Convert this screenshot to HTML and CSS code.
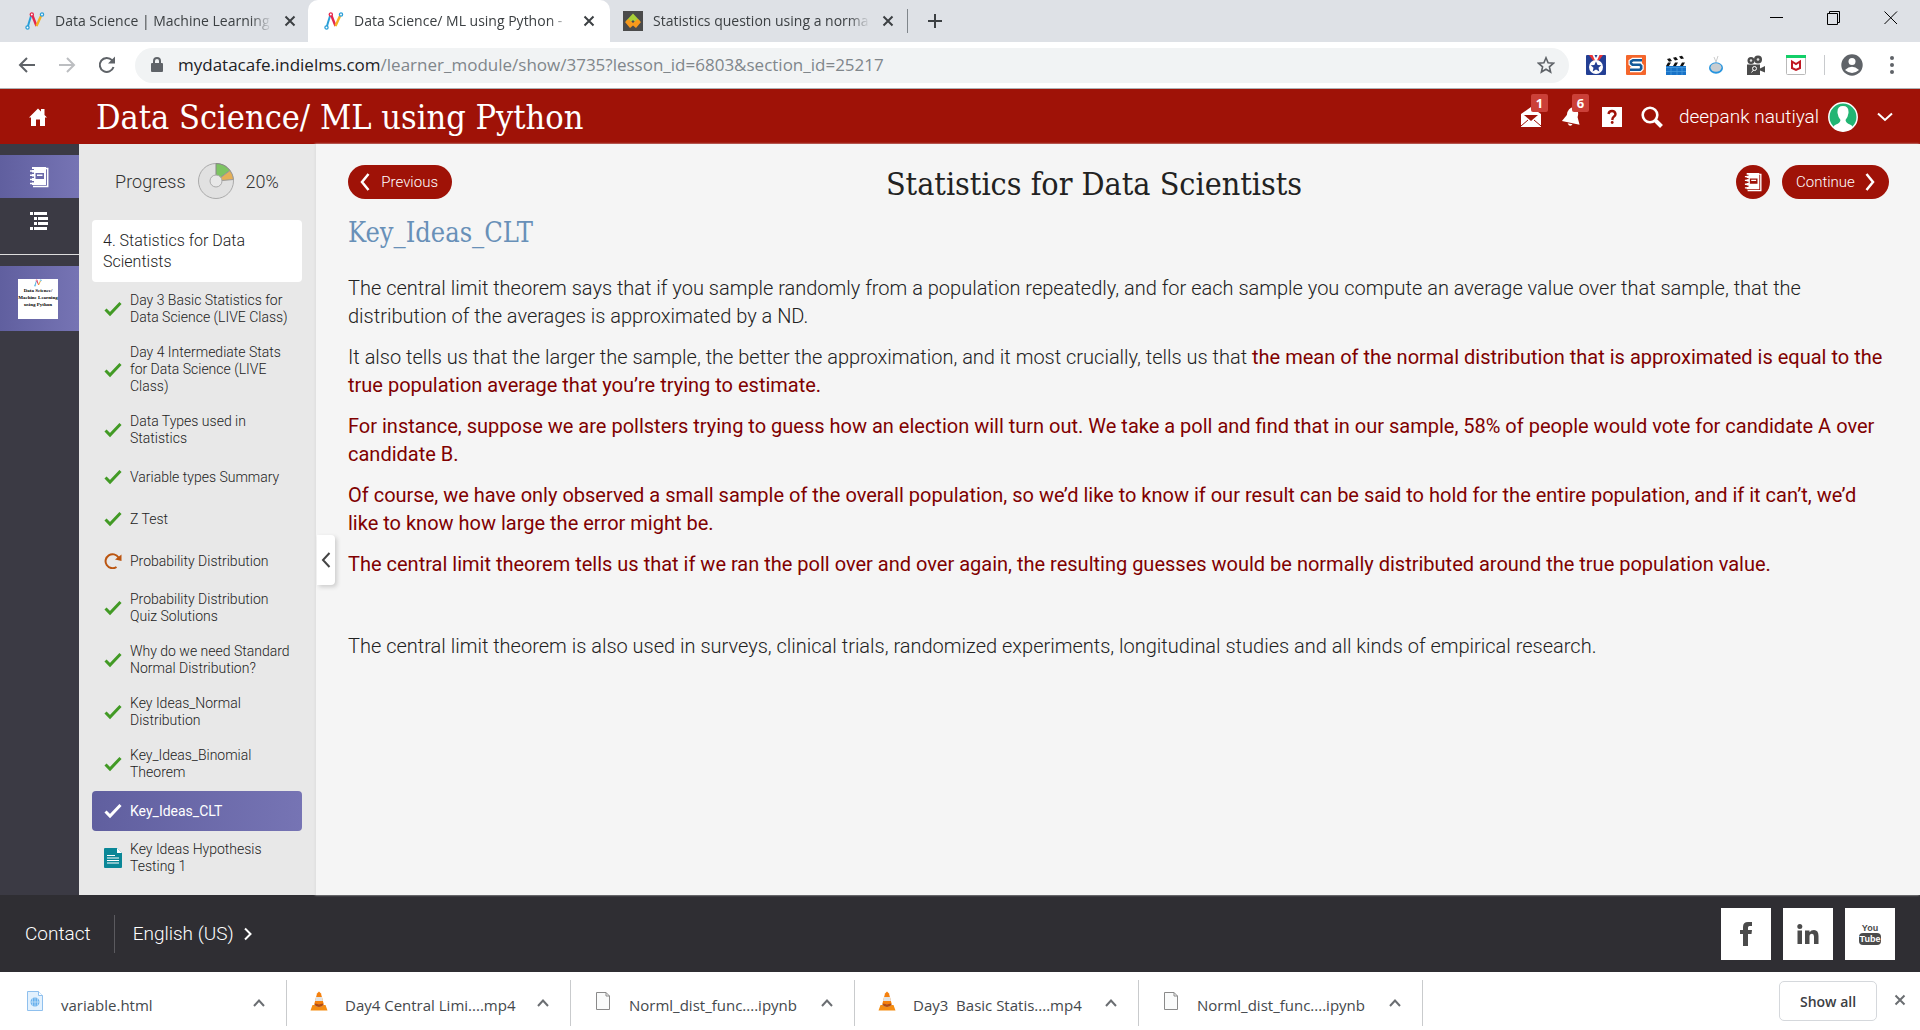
FILE: index.html
```html
<!DOCTYPE html>
<html lang="en">
<head>
<meta charset="utf-8">
<title>Data Science/ ML using Python</title>
<link rel="stylesheet" href="styles.css">
</head>
<body>
<svg class="defs" aria-hidden="true">
  <symbol id="fav" viewBox="0 0 20 20"><path d="M2.500 16.500 6 5" stroke="#2a9fd8" stroke-width="2"/><path d="M7 3.500 11.500 15" stroke="#e5274c" stroke-width="2.400"/><path d="M11.500 15 16 5" stroke="#f5b021" stroke-width="2.400"/><g fill="#fff" stroke-width="1.300"><circle cx="2.500" cy="16.500" r="1.600" stroke="#2a9fd8"/><circle cx="6.800" cy="3.500" r="1.600" stroke="#e5274c"/><circle cx="17" cy="3.500" r="1.600" stroke="#2a9fd8"/></g></symbol>
  <symbol id="x" viewBox="0 0 12 12"><path d="M1.500 1.500 10.500 10.500M10.500 1.500 1.500 10.500" fill="none" stroke="currentColor" stroke-width="2"/></symbol>
  <symbol id="check" viewBox="0 0 18 16"><path d="M1.500 8.500 6 13 16.500 2" fill="none" stroke="currentColor" stroke-width="3"/></symbol>
  <symbol id="book" viewBox="0 0 20 22"><path fill="currentColor" fill-rule="evenodd" d="M3 1H17V19H3V16.500H5V15H3V12H5V10.500H3V8H5V6.500H3V4H5V3H3ZM6.500 7V13H15V7ZM8 8.500H13.500V10H8Z"/><path fill="none" stroke="currentColor" stroke-width="1.500" d="M17 2.500H18.700V20.500H4M1 5H4M1 9.200H4M1 13.500H4M1 17.500H4"/></symbol>
  <symbol id="cone" viewBox="0 0 18 20"><path d="M7 2.500 9 .5 11 2.500 14.500 16H3.500Z" fill="#f5800d"/><path d="M6 6 12 6 13 10H5Z" fill="#e1e4e5"/><path d="M4.200 13H13.800L14.500 16H3.500Z" fill="#c9ccce"/><path d="M2.500 14H4.500Q9 18 13.500 14H15.500L17.500 19.500H.5Z" fill="#f58d12"/><path d="M4.500 14Q9 18 13.500 14L12.700 12.500Q9 14 5.300 12.500Z" fill="#b34c10"/></symbol>
  <symbol id="file" viewBox="0 0 16 20"><path d="M1.500 1.500H11L14.500 5V18.500H1.500Z" fill="#fafbfb" stroke="#8a8a8a"/><path d="M11 1.500V5H14.500" fill="none" stroke="#8a8a8a"/></symbol>
  <symbol id="up" viewBox="0 0 12 8"><path d="M1 7 6 1.500 11 7" fill="none" stroke="#6b6e72" stroke-width="2"/></symbol>
</svg>

<div class="tabstrip">
  <div class="tab"><svg class="favicon"><use href="#fav"/></svg><span class="tab-title">Data Science | Machine Learning</span><button class="close" aria-label="Close tab"><svg width="12" height="12"><use href="#x"/></svg></button></div>
  <div class="tab active"><svg class="favicon"><use href="#fav"/></svg><span class="tab-title">Data Science/ ML using Python -</span><button class="close" aria-label="Close tab"><svg width="12" height="12"><use href="#x"/></svg></button></div>
  <div class="tab last"><svg class="favicon" viewBox="0 0 20 20"><path fill="#4b4b4b" d="M0 0H20V20H0Z"/><path fill="#a8cf38" d="M10 2.500 17 10 14 13 10 9 6 13 3 10Z"/><path fill="#f7991c" d="M2 11 5.500 8 10 12 14.500 8 18 11 13 17 10 14.500 7 17Z"/></svg><span class="tab-title">Statistics question using a norma</span><button class="close" aria-label="Close tab"><svg width="12" height="12"><use href="#x"/></svg></button></div>
  <button class="newtab" aria-label="New tab"><svg width="16" height="16" viewBox="0 0 16 16"><path d="M8 1V15M1 8H15" stroke="#3c4043" stroke-width="2"/></svg></button>
  <div class="window-controls">
    <button aria-label="Minimize"><svg width="14" height="14" viewBox="0 0 14 14"><path d="M0 6.500H13" stroke="#000"/></svg></button>
    <button aria-label="Restore"><svg width="14" height="14" viewBox="0 0 14 14"><path d="M.5 2.500H10.500V13.500H.5ZM2.500 2.500V.5H12.500V11.500H10.500" fill="none" stroke="#000"/></svg></button>
    <button aria-label="Close window"><svg width="14" height="14" viewBox="0 0 14 14"><path d="M.5 .5 13 13M13 .5 .5 13" stroke="#000"/></svg></button>
  </div>
</div>

<div class="toolbar">
  <div class="nav">
    <button aria-label="Back"><svg width="20" height="20" viewBox="0 0 20 20"><path d="M18 10H3M10 3 3 10 10 17" fill="none" stroke="#5f6368" stroke-width="2"/></svg></button>
    <button aria-label="Forward"><svg width="20" height="20" viewBox="0 0 20 20"><path d="M2 10H17M10 3 17 10 10 17" fill="none" stroke="#bcbec1" stroke-width="2"/></svg></button>
    <button aria-label="Reload"><svg width="20" height="20" viewBox="0 0 20 20"><path d="M16.500 12A7 7 0 1 1 15 5.200L16.500 7" fill="none" stroke="#5f6368" stroke-width="2"/><path d="M18 1.500V8.500H11Z" fill="#5f6368"/></svg></button>
  </div>
  <div class="omnibox">
    <svg width="12" height="16" viewBox="0 0 12 16"><path d="M3 6V4A3 3 0 0 1 9 4V6" fill="none" stroke="#5f6368" stroke-width="2"/><rect y="6" width="12" height="9" rx="1" fill="#5f6368"/></svg>
    <span class="url"><b>mydatacafe.indielms.com</b>/learner_module/show/3735?lesson_id=6803&amp;section_id=25217</span>
    <button aria-label="Bookmark"><svg width="18" height="18" viewBox="0 0 18 18"><path d="M9 1.800 11.100 6.700 16.500 7.200 12.400 10.800 13.600 16 9 13.200 4.400 16 5.600 10.800 1.500 7.200 6.900 6.700Z" fill="none" stroke="#5f6368" stroke-width="1.600"/></svg></button>
  </div>
  <div class="extensions">
    <svg width="20" height="20" viewBox="0 0 20 20"><rect width="20" height="20" rx="1" fill="#233f94"/><path d="M3 0H6.500L10 5.500H7ZM13.500 0H17L13 5.500H10Z" fill="#e33"/><path d="M6.500 0H8.500L10 3 11.500 0H13.500L11 5.500H9Z" fill="#fff"/><circle cx="10" cy="12" r="7" fill="#fff"/><circle cx="10" cy="12" r="5" fill="#fff"/><path d="M10 6.500 11.600 10 15.300 10.300 12.500 12.800 13.300 16.500 10 14.600 6.700 16.500 7.500 12.800 4.700 10.300 8.400 10Z" fill="#233f94"/></svg>
    <svg width="20" height="20" viewBox="0 0 20 20"><rect width="20" height="20" rx="1" fill="#f4662c"/><path d="M16 5.200H7L5 6.500V8.500L6.500 9.800H14L15.200 11V13.500L14 14.800H4" fill="none" stroke="#fff" stroke-width="5"/><path d="M16 5.200H7L5 6.500V8.500L6.500 9.800H14L15.200 11V13.500L14 14.800H4" fill="none" stroke="#12599b" stroke-width="2.600"/></svg>
    <svg width="20" height="20" viewBox="0 0 20 20"><rect y="8" width="20" height="12" fill="#1973c8"/><path d="M0 12.500H20M0 16.500H20M5 12V20M11 12V20M16 12V20" stroke="#4b9de0" stroke-width=".7"/><path d="M0 4 19 0 20 3 1 7ZM0 7.500H20V11H0Z" fill="#fff"/><path d="M1 4 4 3.300 6 6 3 6.700ZM7 2.700 10 2 12 4.700 9 5.400ZM13 1.400 16 .7 18 3.400 15 4.100ZM2 7.500H5L3 11H0ZM9 7.500H12L10 11H7ZM16 7.500H19L17 11H14Z" fill="#111"/></svg>
    <svg width="20" height="20" viewBox="0 0 20 20"><path d="M8 2 10 7 12 1" fill="none" stroke="#ccc"/><ellipse cx="10" cy="13" rx="7" ry="5.800" fill="#2795df"/><ellipse cx="10" cy="12.500" rx="5.500" ry="4.200" fill="#c8cdd1"/></svg>
    <svg width="20" height="20" viewBox="0 0 20 20"><g fill="#4b4b4b"><circle cx="5" cy="5.500" r="3.500"/><circle cx="12" cy="4.500" r="4"/><path d="M1 9.500H14V20H1ZM14 13.500 19 11V17.500L14 15.500Z"/></g><circle cx="5" cy="5.500" r="1.200" fill="#ddd"/><circle cx="12" cy="4.500" r="1.300" fill="#ddd"/><circle cx="8.500" cy="13.500" r="2" fill="none" stroke="#fff"/><path d="M7.500 15 5.500 17.500" stroke="#fff"/></svg>
    <svg width="20" height="20" viewBox="0 0 20 20"><rect x=".5" y=".5" width="19" height="19" rx="1" fill="#fff" stroke="#b9b9b9"/><path d="M0 0H20V3H0Z" fill="#12cf68"/><path d="M6 6.500 10 9 14 6.500V13L10 14.800 6 13Z" fill="none" stroke="#c01722" stroke-width="2"/></svg>
  </div>
  <span class="rule"></span>
  <button class="profile" aria-label="Profile"><svg width="22" height="22" viewBox="0 0 22 22"><circle cx="11" cy="11" r="10.700" fill="#5f6368"/><circle cx="11" cy="7.500" r="3.500" fill="#fff"/><path d="M4 16Q11 9.500 18 16Q11 22 4 16Z" fill="#fff"/></svg></button>
  <button class="menu" aria-label="Menu"><svg width="4" height="18" viewBox="0 0 4 18"><g fill="#5f6368"><circle cx="2" cy="2" r="2"/><circle cx="2" cy="9" r="2"/><circle cx="2" cy="16" r="2"/></g></svg></button>
</div>

<header class="header">
  <a class="home" href="#" aria-label="Home"><svg width="20" height="20" viewBox="0 0 20 20"><path fill="#fff" d="M10 1.500 13 4.500V2H16.500V8L19 10.500H17V19H12V12.500H8V19H3V10.500H1Z"/></svg></a>
  <h1>Data Science/ ML using Python</h1>
  <div class="header-tools">
    <button class="tool" aria-label="Messages"><svg width="22" height="22" viewBox="0 0 22 22"><path fill="#fff" d="M1 8 11 1 21 8V21H1Z"/><path d="M4 9H18L11 15Z" fill="#9f1207"/><path d="M1 20 8 14M21 20 14 14" stroke="#9f1207"/></svg><span class="badge">1</span></button>
    <button class="tool" aria-label="Notifications"><svg width="22" height="22" viewBox="0 0 22 22"><g transform="rotate(12 11 11)"><path fill="#fff" d="M11 1Q17 2 16.500 10L20 17H2L5.500 10Q5 2 11 1ZM8 18H13Q11 22 8 18Z"/></g></svg><span class="badge">6</span></button>
    <button class="tool" aria-label="Help"><svg width="20" height="20" viewBox="0 0 20 20"><path fill="#fff" d="M0 0H20V20H0Z"/><path d="M6.500 7Q7 4 10 4T13.500 7Q13.500 8.500 12 9.500T10.200 13" fill="none" stroke="#9f1207" stroke-width="2.400"/><circle cx="10.200" cy="15.500" r="1.400" fill="#9f1207"/></svg></button>
    <button class="tool" aria-label="Search"><svg width="22" height="22" viewBox="0 0 22 22"><circle cx="9" cy="9" r="7.300" fill="none" stroke="#fff" stroke-width="2.600"/><path d="M14 14 20.500 20.500" stroke="#fff" stroke-width="4"/></svg></button>
  </div>
  <button class="user"><span>deepank nautiyal</span><svg width="30" height="30" viewBox="0 0 30 30"><circle cx="15" cy="15" r="14.200" fill="#22b573" stroke="#fff" stroke-width="1.500"/><path fill="#fff" d="M15 4Q21 4 20.500 11 20 15 17.500 18 18 21 22 22.500 24.500 23.500 25 25.500 15 33 5 25.500 5.500 23.500 8 22.500 12 21 12.500 18 10 15 9.500 11 9 4 15 4Z"/></svg><svg width="16" height="10" viewBox="0 0 16 10"><path d="M1 1.500 8 8 15 1.500" fill="none" stroke="#fff" stroke-width="2"/></svg></button>
</header>

<main class="main">
  <nav class="rail" aria-label="Sections">
    <a href="#" class="rail-item on" aria-label="Notebook"><svg width="20" height="22"><use href="#book"/></svg></a>
    <a href="#" class="rail-item" aria-label="Outline"><svg width="18" height="20" viewBox="0 0 18 20"><path fill="#fff" d="M0 1H3V4H0ZM4 1H17V4H4ZM4 6H7V9H4ZM8 6H18V9H8ZM4 11H7V14H4ZM8 11H18V14H8ZM0 16H3V19H0ZM4 16H17V19H4Z"/></svg></a>
    <a href="#" class="rail-course"><span class="thumb"><svg width="8" height="8"><use href="#fav"/></svg><span>Data Science/</span><span>Machine Learning</span><span>using Python</span></span></a>
  </nav>

  <aside class="sidebar">
    <div class="progress"><span>Progress</span><svg width="36" height="36" viewBox="0 0 36 36"><circle cx="18" cy="18" r="17.500" fill="#e1e1e1" stroke="#aaa"/><path d="M18 18V.5A17.500 17.500 0 0 1 32 7.500Z" fill="#7dc462" stroke="#888"/><path d="M18 18 32 7.500A17.500 17.500 0 0 1 35.500 16.500Z" fill="#e5b057" stroke="#999"/><circle cx="18" cy="18" r="6" fill="#e8e8e8" stroke="#aaa"/></svg><span>20%</span></div>
    <h2 class="chapter">4. Statistics for Data Scientists</h2>
    <ul class="lessons">
      <li><a href="#"><svg><use href="#check"/></svg>Day 3 Basic Statistics for Data Science (LIVE Class)</a></li>
      <li><a href="#"><svg><use href="#check"/></svg>Day 4 Intermediate Stats for Data Science (LIVE Class)</a></li>
      <li><a href="#"><svg><use href="#check"/></svg>Data Types used in Statistics</a></li>
      <li><a href="#"><svg><use href="#check"/></svg>Variable types Summary</a></li>
      <li><a href="#"><svg><use href="#check"/></svg>Z Test</a></li>
      <li><a href="#"><svg viewBox="0 0 18 16"><path d="M12.500 14A7 7 0 1 1 14.500 4.500" fill="none" stroke="#bb5510" stroke-width="2"/><path d="M17.500 1.500V8L11 6.500Z" fill="#bb5510"/></svg>Probability Distribution</a></li>
      <li><a href="#"><svg><use href="#check"/></svg>Probability Distribution Quiz Solutions</a></li>
      <li><a href="#"><svg><use href="#check"/></svg>Why do we need Standard Normal Distribution?</a></li>
      <li><a href="#"><svg><use href="#check"/></svg>Key Ideas_Normal Distribution</a></li>
      <li><a href="#"><svg><use href="#check"/></svg>Key_Ideas_Binomial Theorem</a></li>
      <li><a href="#" class="current"><svg><use href="#check"/></svg>Key_Ideas_CLT</a></li>
      <li><a href="#"><svg class="doc" viewBox="0 0 18 20"><path d="M0 1Q0 0 1 0H13L18 5V19Q18 20 17 20H1Q0 20 0 19Z" fill="#0a8797"/><path d="M13 0V5H18Z" fill="#fff"/><path d="M3 7.500H11M3 10H15M3 12.500H15M3 15H15" stroke="#fff"/></svg>Key Ideas Hypothesis Testing 1</a></li>
    </ul>
  </aside>

  <section class="content">
    <button class="collapse" aria-label="Collapse sidebar"><svg width="10" height="16" viewBox="0 0 10 16"><path d="M8.500 1 2 8 8.500 15" fill="none" stroke="#444" stroke-width="2"/></svg></button>
    <div class="lesson-bar">
      <button class="pill prev"><svg width="10" height="18" viewBox="0 0 10 18"><path d="M8.500 1 2 9 8.500 17" fill="none" stroke="#fff" stroke-width="2.500"/></svg>Previous</button>
      <h2>Statistics for Data Scientists</h2>
      <div class="lesson-next">
        <button class="round" aria-label="Notebook"><svg width="18" height="20"><use href="#book"/></svg></button>
        <button class="pill next">Continue<svg width="10" height="18" viewBox="0 0 10 18"><path d="M1.500 1 8 9 1.500 17" fill="none" stroke="#fff" stroke-width="2.500"/></svg></button>
      </div>
    </div>
    <h3>Key_Ideas_CLT</h3>
    <article>
      <p>The central limit theorem says that if you sample randomly from a population repeatedly, and for each sample you compute an average value over that sample, that the distribution of the averages is approximated by a ND.</p>
      <p>It also tells us that the larger the sample, the better the approximation, and it most crucially, tells us that <strong>the mean of the normal distribution that is approximated is equal to the true population average that you’re trying to estimate.</strong></p>
      <p><strong>For instance, suppose we are pollsters trying to guess how an election will turn out. We take a poll and find that in our sample, 58% of people would vote for candidate A over candidate B.</strong></p>
      <p><strong>Of course, we have only observed a small sample of the overall population, so we’d like to know if our result can be said to hold for the entire population, and if it can’t, we’d like to know how large the error might be.</strong></p>
      <p><strong>The central limit theorem tells us that if we ran the poll over and over again, the resulting guesses would be normally distributed around the true population value.</strong></p>
      <p>&nbsp;</p>
      <p>The central limit theorem is also used in surveys, clinical trials, randomized experiments, longitudinal studies and all kinds of empirical research.</p>
    </article>
  </section>
</main>

<footer class="footer">
  <a href="#" class="contact">Contact</a>
  <a href="#" class="language">English (US)<svg width="8" height="14" viewBox="0 0 8 14"><path d="M1 1.500 6.500 7 1 12.500" fill="none" stroke="#fff" stroke-width="2"/></svg></a>
  <div class="social">
    <a href="#" aria-label="Facebook"><svg width="14" height="24" viewBox="0 0 14 24"><path fill="#4b4b4b" d="M13 0V4H10.500Q9 4 9 5.500V8H13L12.500 12H9V24H4V12H1V8H4V5Q4 0 9 0Z"/></svg></a>
    <a href="#" aria-label="LinkedIn"><svg width="22" height="20" viewBox="0 0 22 20"><circle cx="2.800" cy="2.500" r="2.500" fill="#4b4b4b"/><path fill="#4b4b4b" d="M.5 6.500H5V20H.5ZM8 6.500H12.500V8.300Q14 6 17 6 21.500 6 21.500 12V20H17V12.500Q17 9.800 15 9.800 12.500 9.800 12.500 12.500V20H8Z"/></svg></a>
    <a href="#" class="youtube" aria-label="YouTube"><span>You</span><b>Tube</b></a>
  </div>
</footer>

<div class="downloads">
  <div class="download"><svg viewBox="0 0 16 20"><path d="M.5 .5H11.500L15.500 4.500V19.500H.5Z" fill="#e3f1fd" stroke="#8fc0ee"/><path d="M11.500 .5V4.500H15.500" fill="#fff" stroke="#8fc0ee"/><circle cx="8" cy="11" r="4.500" fill="#64aeec"/><path d="M3.500 11H12.500M8 6.500V15.500M5.800 7Q4.500 11 5.800 15M10.200 7Q11.500 11 10.200 15" fill="none" stroke="#e3f1fd" stroke-width=".6"/></svg><span>variable.html</span><button aria-label="Options"><svg><use href="#up"/></svg></button></div>
  <div class="download"><svg><use href="#cone"/></svg><span>Day4 Central Limi....mp4</span><button aria-label="Options"><svg><use href="#up"/></svg></button></div>
  <div class="download"><svg><use href="#file"/></svg><span>Norml_dist_func....ipynb</span><button aria-label="Options"><svg><use href="#up"/></svg></button></div>
  <div class="download"><svg><use href="#cone"/></svg><span>Day3&nbsp; Basic Statis....mp4</span><button aria-label="Options"><svg><use href="#up"/></svg></button></div>
  <div class="download"><svg><use href="#file"/></svg><span>Norml_dist_func....ipynb</span><button aria-label="Options"><svg><use href="#up"/></svg></button></div>
  <button class="showall">Show all</button>
  <button class="dismiss" aria-label="Close downloads"><svg width="12" height="12"><use href="#x"/></svg></button>
</div>
</body>
</html>
```
FILE: styles.css
```css
* { box-sizing: border-box; }
body {
  margin: 0;
  min-height: 100vh;
  display: flex;
  flex-direction: column;
  font-family: Roboto, sans-serif;
  font-weight: 300;
  color: #222;
  background: #f5f5f5;
}
button { border: 0; padding: 0; background: none; font: inherit; color: inherit; display: flex; align-items: center; }
a { color: inherit; text-decoration: none; }
h1, h2, h3, p, ul { margin: 0; padding: 0; }
h1, h2, h3 { font-weight: 400; }
svg { display: block; flex: none; }
.defs { position: absolute; width: 0; height: 0; }

/* browser frame */
.tabstrip, .toolbar, .downloads { font-family: "Open Sans", sans-serif; font-weight: 400; flex: none; }
.tabstrip { height: 42px; display: flex; background: #dee1e6; }
.tab { width: 302px; display: flex; align-items: center; padding: 0 15px 0 16px; color: #3c4043; }
.tab:first-child { width: 308px; padding: 0 12px 0 25px; }
.tab.active { background: #fff; border-radius: 10px 10px 0 0; }
.tab.last { width: 297px; padding: 0 13px; }
.favicon { width: 20px; height: 20px; margin-right: 10px; }
.tab-title {
  flex: 1;
  min-width: 0;
  overflow: hidden;
  white-space: nowrap;
  font-size: 14px;
  line-height: 20px;
  -webkit-mask-image: linear-gradient(90deg, #000 90%, transparent);
  mask-image: linear-gradient(90deg, #000 90%, transparent);
}
.close { width: 12px; margin-left: 12px; }
.newtab { padding: 0 20px; position: relative; }
.newtab::before { content: ""; width: 1px; height: 24px; background: #80868b; position: absolute; left: 0; top: 9px; }
.window-controls { margin-left: auto; display: flex; gap: 43px; padding: 0 22px 6px 0; }
.toolbar { height: 47px; display: flex; align-items: center; background: #fff; border-bottom: 1px solid #aeb0b3; }
.nav { display: flex; gap: 20px; padding: 0 18px 0 17px; }
.omnibox { flex: 1; height: 35px; border-radius: 18px; background: #f1f3f4; display: flex; align-items: center; padding: 0 14px 0 16px; }
.url { flex: 1; margin-left: 15px; font-size: 17px; line-height: 24px; color: #80868b; white-space: nowrap; }
.url b { font-weight: 400; color: #202124; }
.extensions { display: flex; gap: 20px; padding: 0 18px 0 17px; }
.rule { width: 1px; height: 20px; background: #c8cacd; }
.profile { margin-left: 16px; }
.menu { margin: 0 26px 0 27px; }

/* application header */
.header { height: 55px; flex: none; display: flex; align-items: center; padding: 0 27px 0 28px; background: #9f1207; color: #fff; }
.header h1 { margin-left: 48px; font-family: "DejaVu Serif Condensed", "DejaVu Serif", serif; font-size: 34px; line-height: 40px; }
.header-tools { margin-left: auto; display: flex; gap: 19px; }
.tool { position: relative; height: 22px; }
.badge { position: absolute; left: 11px; top: -12px; width: 17px; height: 18px; border-radius: 2px; background: #cb4038; font: bold 13px/18px "Open Sans", sans-serif; text-align: center; }
.user { margin-left: 16px; font-size: 19px; line-height: 24px; }
.user svg { margin-left: 9px; }
.user svg + svg { margin-left: 19px; }

/* course area */
.main { flex: 1; display: flex; }
.rail { width: 79px; flex: none; background: #3b3a44; padding-top: 11px; color: #fff; }
.rail-item { height: 43px; display: flex; align-items: center; justify-content: center; padding-right: 2px; }
.on, .rail-course, .current { background: linear-gradient(90deg, #605f9f, #7674b4); }
.rail-item + .rail-item { height: 57px; padding-bottom: 11px; border-bottom: 1px solid #ddd; }
.rail-course { height: 65px; margin-top: 11px; padding: 0 21px 0 18px; display: flex; align-items: center; }
.thumb { width: 40px; height: 40px; background: #fff; color: #000; display: flex; flex-direction: column; align-items: center; font: bold 5px/7px "Liberation Serif", serif; white-space: nowrap; }
.sidebar { width: 237px; flex: none; background: #e8e8e8; padding: 19px 14px 12px 13px; }
.progress { height: 36px; display: flex; align-items: center; justify-content: center; gap: 12px; margin-bottom: 21px; font-size: 18px; color: #333; }
.chapter { background: #fff; border-radius: 4px; padding: 10px 11px; font-size: 16px; line-height: 21px; font-weight: 300; }
.lessons { list-style: none; padding-top: 2px; display: flex; flex-direction: column; gap: 2px; }
.lessons a { display: flex; align-items: center; min-height: 40px; border-radius: 4px; padding: 8px 12px; font-size: 14px; line-height: 17px; }
.lessons svg { width: 18px; height: 16px; margin-right: 8px; color: #429a25; }
.lessons .doc { height: 20px; }
.lessons .current, .lessons .current svg { color: #fff; }
.lessons .current { font-weight: 400; }

.content { flex: 1; min-width: 0; position: relative; padding: 21px 31px 24px 32px; box-shadow: -1px 0 2px #ddd; }
.collapse { position: absolute; left: 1px; top: 52%; width: 18px; height: 50px; justify-content: center; background: #fff; border-radius: 0 4px 4px 0; box-shadow: 2px 2px 4px #ccc; }
.lesson-bar { height: 34px; display: flex; align-items: center; justify-content: space-between; }
.lesson-bar h2, .content h3 { font-family: "DejaVu Serif Condensed", "DejaVu Serif", serif; }
.lesson-bar h2 { padding-top: 4px; font-size: 32px; line-height: 34px; }
.lesson-next { display: flex; gap: 12px; }
.pill, .round { height: 34px; border-radius: 17px; background: #9f1207; color: #fff; font-size: 15px; }
.round { width: 34px; justify-content: center; }
.pill { justify-content: space-between; }
.prev { width: 104px; padding: 0 14px 0 12px; }
.next { width: 107px; padding: 0 14px; }
.content h3 { margin-top: 17px; font-size: 27px; line-height: 34px; color: #6890b8; }
article { margin-top: 24px; font-size: 20px; line-height: 28px; }
article p { margin-bottom: 13px; }
article strong { font-weight: 400; color: #800000; }

/* footer */
.footer { height: 77px; flex: none; display: flex; align-items: center; padding: 0 25px; background: #2f2e33; color: #fff; font-size: 19px; line-height: 24px; }
.language { display: flex; align-items: center; gap: 10px; height: 38px; margin-left: 23px; padding-left: 18px; border-left: 1px solid #5b5a5f; }
.social { margin-left: auto; display: flex; gap: 12px; }
.social a { width: 50px; height: 52px; background: #fff; display: flex; align-items: center; justify-content: center; }
.social .youtube { flex-direction: column; color: #4b4b4b; font: bold 9px/10px "Liberation Sans", sans-serif; }
.youtube b { background: #4b4b4b; color: #fff; border-radius: 4px; padding: 1px; }

/* downloads shelf */
.downloads { height: 59px; display: flex; padding: 8px 14px 5px 3px; background: #fff; color: #44484c; font-size: 15px; }
.download { width: 284px; display: flex; align-items: center; padding-left: 23px; border-right: 1px solid #c9cbcd; }
.download > svg { width: 18px; height: 20px; margin: 0 17px 4px 0; }
.download span { flex: 1; white-space: nowrap; line-height: 20px; padding-top: 3px; }
.download button { width: 12px; margin-right: 21px; }
.download button svg { width: 12px; height: 8px; }
.showall { margin: 1px 0 0 auto; width: 98px; height: 40px; justify-content: center; border: 1px solid #d5d8dc; border-radius: 5px; font-size: 14px; font-weight: 600; color: #3c4043; }
.dismiss { width: 12px; height: 40px; margin-left: 17px; color: #6b6e72; }
```
